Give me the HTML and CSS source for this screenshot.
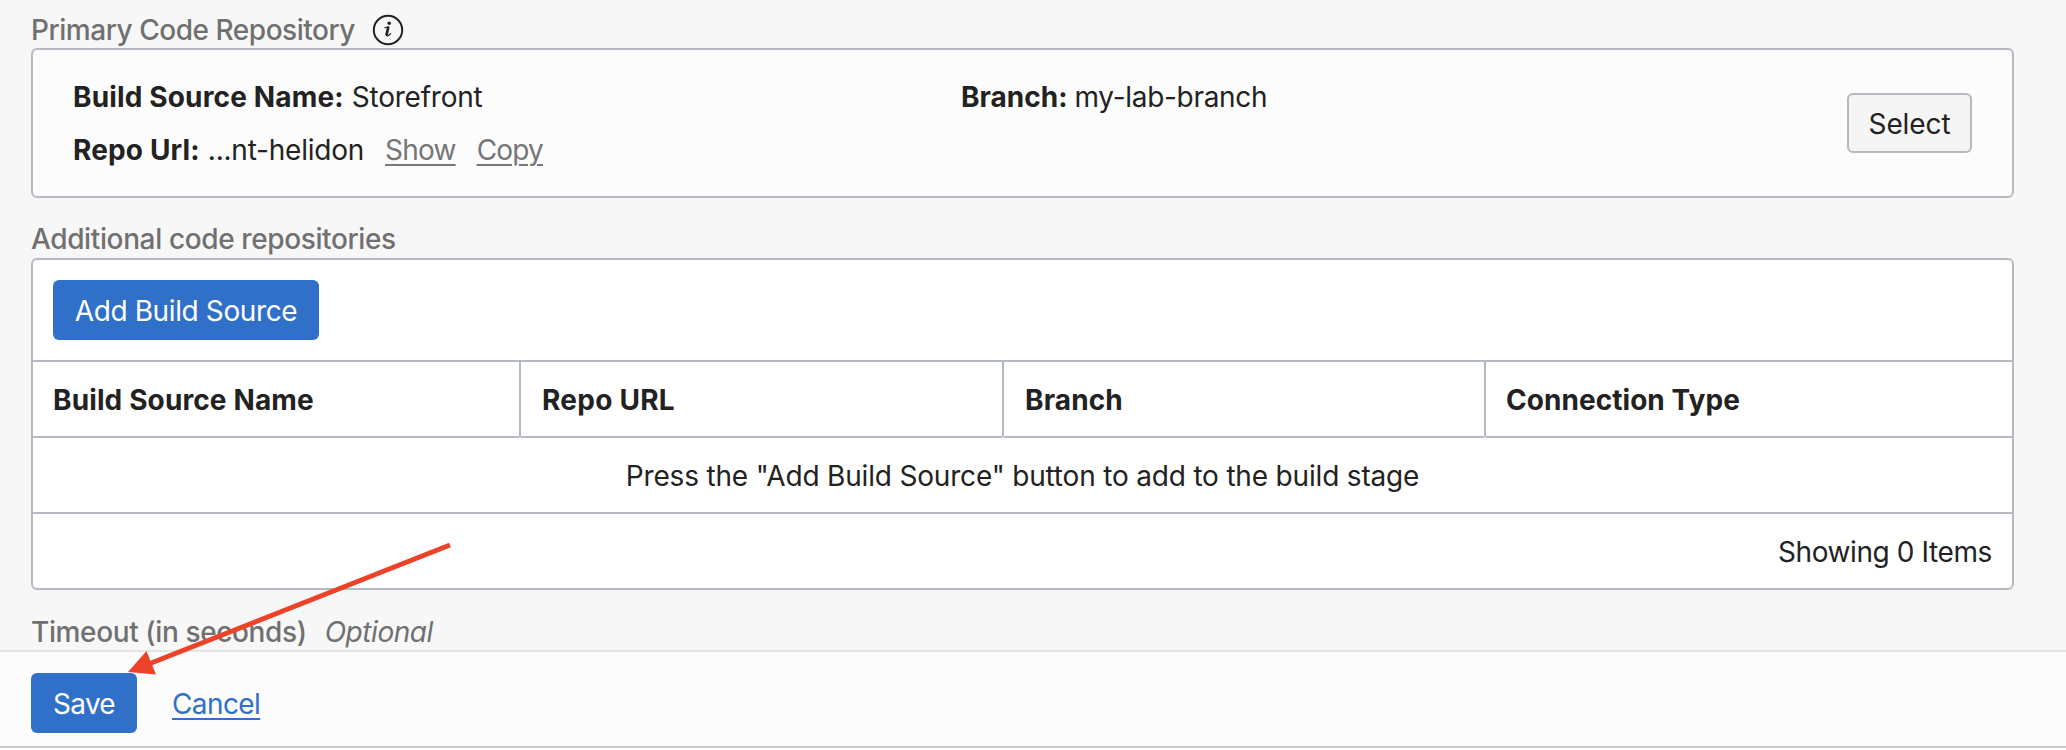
FILE: index.html
```html
<!DOCTYPE html>
<html lang="en">
<head>
<meta charset="utf-8">
<title>Build stage</title>
<link rel="stylesheet" href="styles.css">
</head>
<body>
<main class="form">
  <div class="label">
    <span class="t-primary">Primary Code Repository</span>
    <svg class="info" width="32" height="32" viewBox="0 0 32 32" fill="none" stroke="#222" stroke-linecap="round" stroke-linejoin="round">
      <circle cx="16" cy="16" r="14.2" stroke-width="2"/>
      <path d="M13 13.6L16.2 13" stroke-width="1.2"/>
      <path d="M16.2 13.6L14.6 20.4" stroke-width="2.6"/>
      <path d="M14.4 20.6Q14.6 22.6 16.6 21.5L18.6 19.6" stroke-width="1.3"/>
      <circle cx="17.2" cy="9.2" r="1.8" fill="#222" stroke="none"/>
    </svg>
  </div>
  <section class="card">
    <div class="details">
      <div class="line"><b>Build Source Name:</b><span>Storefront</span></div>
      <div class="line"><b>Repo Url:</b><span>...nt-helidon</span><a class="link">Show</a><a class="link">Copy</a></div>
    </div>
    <div class="details">
      <div class="line"><b class="t-branch">Branch:</b><span class="t-lab">my-lab-branch</span></div>
    </div>
    <button class="btn btn-plain">Select</button>
  </section>
  <div class="label label-next"><span>Additional code repositories</span></div>
  <section class="table">
    <div class="toolbar"><button class="btn btn-blue btn-add">Add Build Source</button></div>
    <div class="row head">
      <div class="cell"><span>Build Source Name</span></div>
      <div class="cell"><span class="t-h2">Repo URL</span></div>
      <div class="cell"><span class="t-h3">Branch</span></div>
      <div class="cell"><span>Connection Type</span></div>
    </div>
    <div class="row empty"><span>Press the "Add Build Source" button to add to the build stage</span></div>
    <div class="row count"><span>Showing 0 Items</span></div>
  </section>
  <div class="label label-timeout"><span>Timeout (in seconds)</span><i class="t-opt">Optional</i></div>
</main>
<footer class="footer">
  <button class="btn btn-blue btn-save">Save</button>
  <a class="cancel">Cancel</a>
</footer>
<svg class="arrow" width="340" height="140" viewBox="120 540 340 140">
  <path d="M450 545L150 663.5" stroke="#ec4328" stroke-width="5" fill="none"/>
  <path d="M128 672L146.5 651L156 674.5Z" fill="#ec4328"/>
</svg>
</body>
</html>
```
FILE: styles.css
```css
* { box-sizing: border-box; }
body {
  position: relative;
  margin: 0;
  height: 750px;
  overflow: hidden;
  background: #fff;
  color: #222;
  font: 28px/34px Inter, "Liberation Sans", sans-serif;
  white-space: nowrap;
}
.form { height: 650px; padding: 0 52px 0 31px; background: #f7f7f7; overflow: hidden; }
.label { display: flex; align-items: center; height: 48px; padding-top: 12px; color: #707070; font-weight: 500; letter-spacing: -0.38px; }
.t-primary { letter-spacing: -0.46px; }
.info { margin: 0 0 0 17px; }
.card {
  display: grid;
  grid-template-columns: 888px 1fr 125px;
  height: 150px;
  padding: 20px 40px 0;
  border: 2px solid #b5bac0;
  border-radius: 6px;
  background: #fcfcfc;
}
.line { display: flex; height: 53px; align-items: center; letter-spacing: -0.22px; }
.line b { margin-right: 8px; font-weight: 700; letter-spacing: 0.15px; }
.line .t-branch { margin-right: 7px; letter-spacing: 0; }
.t-lab { letter-spacing: -0.3px; }
.link { color: #767676; text-decoration: underline; text-decoration-thickness: 2px; text-underline-offset: 4px; margin-left: 21px; letter-spacing: -0.8px; }
.btn { height: 60px; padding: 2px 0 0; border: 0; border-radius: 6px; font: inherit; color: #fff; text-align: center; letter-spacing: -0.38px; }
.btn-blue { background: #3070c8; }
.btn-plain { width: 125px; margin-top: 23px; border: 2px solid #b5bac0; background: #f5f5f5; color: #222; letter-spacing: -0.1px; }
.label-next { height: 60px; padding-top: 22px; }
.table { height: 332px; border: 2px solid #b5bac0; border-radius: 6px; background: #fff; }
.toolbar { height: 100px; padding: 20px; }
.btn-add { width: 266px; }
.row { display: flex; height: 76px; align-items: center; padding-top: 2px; border-top: 2px solid #b5bac0; }
.head { display: grid; grid-template-columns: 488px 483px 482px 1fr; align-items: stretch; padding: 0; font-weight: 700; letter-spacing: 0.12px; }
.cell { position: relative; display: flex; align-items: center; padding: 2px 0 0 20px; border-right: 2px solid #b5bac0; }
.cell:last-child { border-right: 0; letter-spacing: 0.05px; }
.cell:not(:last-child)::after { content: ""; position: absolute; right: -2px; bottom: -2px; width: 2px; height: 1px; background: #fff; }
.t-h2 { margin-left: 1px; letter-spacing: 0.25px; }
.t-h3 { margin-left: 1px; }
.empty { justify-content: center; letter-spacing: -0.18px; }
.count { justify-content: flex-end; padding-right: 20px; letter-spacing: -0.4px; }
.label-timeout { height: 60px; padding-top: 24px; }
.t-opt { margin-left: 18px; font-weight: 400; letter-spacing: -0.45px; }
.footer { display: flex; align-items: center; gap: 35px; height: 98px; padding: 8px 31px 0; border-top: 2px solid #e5e5e5; border-bottom: 2px solid #c8c8c8; background: #fcfcfc; }
.btn-save { width: 106px; letter-spacing: -0.7px; }
.cancel { color: #3070c8; padding-top: 2px; text-decoration: underline; text-decoration-thickness: 2px; text-underline-offset: 4px; letter-spacing: -0.6px; }
.arrow { position: absolute; left: 120px; top: 540px; }
```
